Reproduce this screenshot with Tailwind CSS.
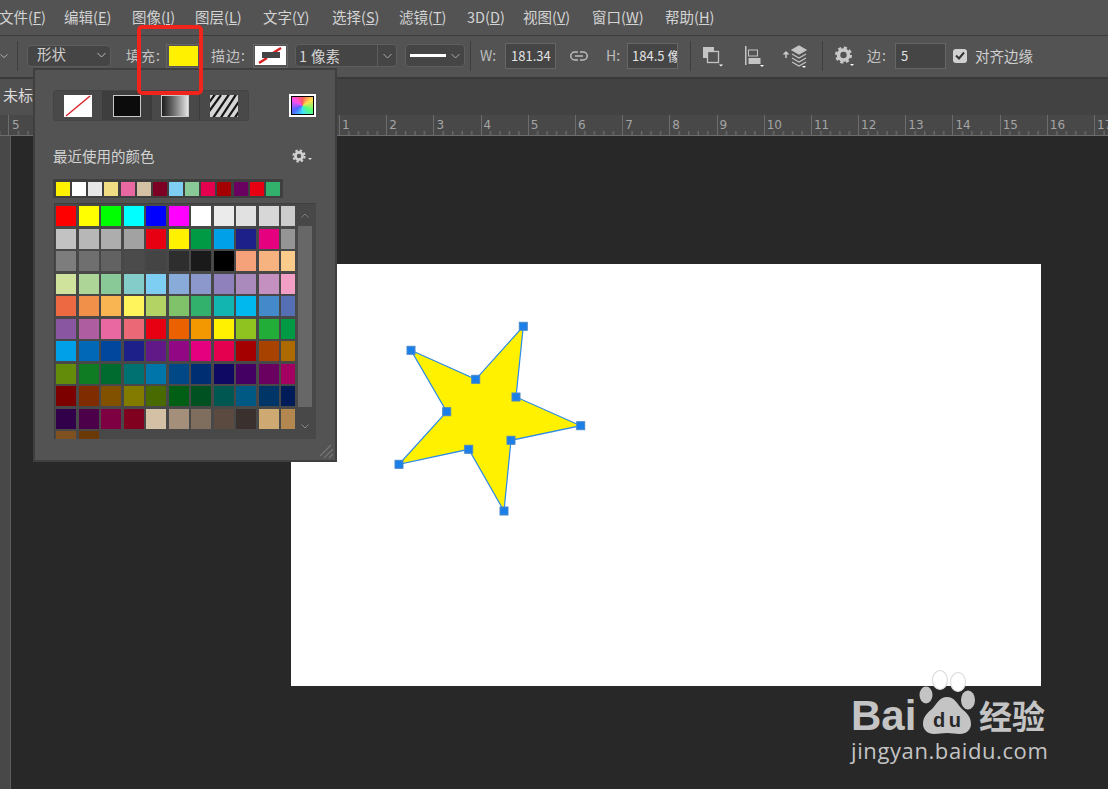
<!DOCTYPE html>
<html lang="zh">
<head>
<meta charset="utf-8">
<script src="https://cdn.jsdelivr.net/npm/@tailwindcss/browser@4"></script>
<title>Photoshop</title>
</head>
<body class="bg-[#282828]">
<div class="relative w-[1108px] h-[789px] overflow-hidden flex flex-col bg-[#282828] text-[#d4d4d4] text-[14px] font-['Noto_Sans_CJK_SC','Noto_Sans',sans-serif]">

  <!-- menu bar -->
  <nav class="flex items-center shrink-0 h-[36px] pb-[2px] bg-[#535353] border-b border-[#3c3c3c] whitespace-nowrap text-[14.5px]">
    <span class="w-[64px] -ml-[1px]">文件(<u>F</u>)</span>
    <span class="w-[68px] ml-[1px]">编辑(<u>E</u>)</span>
    <span class="w-[63px]">图像(<u>I</u>)</span>
    <span class="w-[68px]">图层(<u>L</u>)</span>
    <span class="w-[69px]">文字(<u>Y</u>)</span>
    <span class="w-[67px]">选择(<u>S</u>)</span>
    <span class="w-[68px]">滤镜(<u>T</u>)</span>
    <span class="w-[56px]">3D(<u>D</u>)</span>
    <span class="w-[69px]">视图(<u>V</u>)</span>
    <span class="w-[73px]">窗口(<u>W</u>)</span>
    <span>帮助(<u>H</u>)</span>
  </nav>

  <!-- options bar -->
  <div class="flex items-center shrink-0 h-[43px] pb-[2px] bg-[#535353] border-b-2 border-[#3a3a3a] whitespace-nowrap text-[14px] text-[#c4c4c4]">
    <svg class="w-[8px] h-[6px]" viewBox="0 0 8 6"><path d="M0.5 1.5L4 4.5L7.5 1.5" fill="none" stroke="#aaa"/></svg>
    <div class="ml-[9px] w-px h-[30px] bg-[#3e3e3e]"></div>
    <div class="ml-[9px] w-[84px] h-[22px] flex items-center justify-between pl-[9px] pr-[4px] pb-[1px] rounded-[4px] bg-[#454545] border border-[#5e5e5e] text-[14.5px] text-[#d0d0d0]">
      <span class="-mt-[2px]">形状</span>
      <svg class="w-[9px] h-[6px]" viewBox="0 0 9 6"><path d="M0.5 1L4.5 5L8.5 1" fill="none" stroke="#bbb"/></svg>
    </div>
    <span class="ml-[15px] w-[36px] tracking-[1px] -mt-[1px]">填充:</span>
    <div class="ml-[4px] w-[35px] h-[24px] flex items-center justify-center border border-[#656565]"><div class="w-[29px] h-[20px] bg-[#fff100]"></div></div>
    <span class="ml-[10px] w-[36px] tracking-[1px] -mt-[1px]">描边:</span>
    <div class="ml-[6px] w-[35px] h-[24px] flex items-center justify-center border border-[#656565]">
      <svg class="w-[31px] h-[19px]" viewBox="0 0 31 19"><rect width="31" height="19" fill="#fff"/><path d="M4 17L12 12M18 7L26 2" stroke="#d8211f" stroke-width="2.5"/><rect x="7" y="6" width="18" height="6" fill="#444"/></svg>
    </div>
    <div class="ml-[7px] w-[102px] h-[23px] flex items-center rounded-[4px] bg-[#454545] border border-[#5e5e5e] text-[14.5px] text-[#d6d6d6]">
      <span class="flex-1 pl-[3px] flex gap-[4px]"><span>1</span><span>像素</span></span>
      <span class="w-[19px] h-full flex items-center justify-center border-l border-[#5e5e5e]"><svg class="w-[9px] h-[6px]" viewBox="0 0 9 6"><path d="M0.5 1L4.5 5L8.5 1" fill="none" stroke="#aaa"/></svg></span>
    </div>
    <div class="ml-[8px] w-[60px] h-[23px] flex items-center justify-between pl-[4px] pr-[4px] rounded-[4px] bg-[#454545] border border-[#5e5e5e]">
      <div class="w-[36px] h-[3px] bg-white"></div>
      <svg class="w-[9px] h-[6px]" viewBox="0 0 9 6"><path d="M0.5 1L4.5 5L8.5 1" fill="none" stroke="#aaa"/></svg>
    </div>
    <div class="ml-[5px] w-px h-[30px] bg-[#3e3e3e]"></div>
    <span class="ml-[9px] w-[17px] text-[14px] text-[#bdbdbd]">W:</span>
    <div class="ml-[8px] w-[51px] h-[26px] flex items-center pl-[5px] bg-[#454545] border border-[#666] text-[13px] text-[#e2e2e2]">181.34</div>
    <svg class="ml-[14px] w-[18px] h-[10px]" viewBox="0 0 18 10"><path d="M8 1H4.8a4 4 0 0 0 0 8H8M10 1H13.2a4 4 0 0 1 0 8H10M5 5H13" fill="none" stroke="#bdbdbd" stroke-width="1.5"/></svg>
    <span class="ml-[18px] w-[14px] text-[14px] text-[#bdbdbd]">H:</span>
    <div class="ml-[7px] w-[51px] h-[26px] flex items-center pl-[4px] overflow-hidden bg-[#454545] border border-[#666] text-[13px] text-[#e2e2e2]">184.5 像</div>
    <div class="ml-[12px] w-px h-[30px] bg-[#3e3e3e]"></div>
    <svg class="ml-[11px] w-[22px] h-[22px]" viewBox="0 0 22 22"><rect x="1" y="2" width="11" height="11" fill="#c4c4c4"/><rect x="5.5" y="6.5" width="11" height="11" fill="#535353" stroke="#c4c4c4" stroke-width="1.3"/><path d="M17 19.5H21L19 21.5Z" fill="#fff"/></svg>
    <svg class="ml-[21px] w-[20px] h-[22px]" viewBox="0 0 20 22"><rect x="0" y="1" width="1.5" height="19" fill="#c4c4c4"/><rect x="3.5" y="5" width="9" height="6" fill="#535353" stroke="#c4c4c4"/><rect x="3.5" y="13" width="12" height="6" fill="#c4c4c4"/><path d="M15 20H19L17 22Z" fill="#fff"/></svg>
    <svg class="ml-[18px] w-[25px] h-[24px]" viewBox="0 0 25 24"><path d="M3 14V9M0.5 10.5L3 8L5.5 10.5" fill="none" stroke="#ccc" stroke-width="1.5"/><path d="M16 2L23 6L16 10L9 6Z" fill="#c4c4c4" stroke="#c4c4c4" stroke-width="1.2"/><path d="M9 10L16 14L23 10M9 14L16 18L23 14M9 18L16 22L23 18" fill="none" stroke="#c4c4c4" stroke-width="1.2"/><path d="M19 22H23L21 24Z" fill="#fff"/></svg>
    <div class="ml-[14px] w-px h-[30px] bg-[#3e3e3e]"></div>
    <svg class="ml-[12px] w-[20px] h-[22px]" viewBox="0 0 20 22"><circle cx="8.5" cy="10" r="5" fill="none" stroke="#c8c8c8" stroke-width="3.6"/><circle cx="8.5" cy="10" r="7.3" fill="none" stroke="#c8c8c8" stroke-width="2.4" stroke-dasharray="3.2 2.54"/><path d="M15 19H19L17 21Z" fill="#fff"/></svg>
    <span class="ml-[12px] w-[22px] tracking-[1px] -mt-[1px]">边:</span>
    <div class="ml-[6px] w-[51px] h-[26px] flex items-center pl-[5px] bg-[#454545] border border-[#666] text-[13px] text-[#e2e2e2]">5</div>
    <div class="ml-[7px] w-[14px] h-[14px] flex items-center justify-center rounded-[3px] bg-[#d0d0d0]">
      <svg class="w-[10px] h-[9px]" viewBox="0 0 10 9"><path d="M1 4.5L4 7.5L9 1.5" fill="none" stroke="#333" stroke-width="2"/></svg>
    </div>
    <span class="ml-[8px] text-[14.5px] text-[#d0d0d0]">对齐边缘</span>
  </div>

  <!-- tab row -->
  <div class="flex shrink-0 h-[36px] bg-[#424242]">
    <div class="w-[60px] h-full flex items-center pl-[3px] pb-[3px] bg-[#505050] text-[15px] text-[#dcdcdc]">未标</div>
  </div>

  <!-- horizontal ruler -->
  <div class="relative flex shrink-0 h-[21px] pl-[8px] bg-[#484848] border-b border-[#6c6c6c] text-[12px] leading-[20px] text-[#a4a4a4] font-['DejaVu_Sans',sans-serif] overflow-hidden">
    <svg class="absolute inset-0 w-[1108px] h-[20px]" viewBox="0 0 1108 20"><defs><pattern id="t" x="339" y="0" width="47.2" height="20" patternUnits="userSpaceOnUse"><path d="M9.9 16V20M19.4 16V20M28.8 16V20M38.3 16V20" stroke="#777" stroke-width="1"/></pattern></defs><rect width="1108" height="20" fill="url(#t)"/></svg>
    <span class="shrink-0 w-[331px] pl-[3px] border-l border-[#6c6c6c]">5</span>
    <span class="shrink-0 w-[47.2px] pl-[2px] border-l border-[#6c6c6c]">1</span>
    <span class="shrink-0 w-[47.2px] pl-[2px] border-l border-[#6c6c6c]">2</span>
    <span class="shrink-0 w-[47.2px] pl-[2px] border-l border-[#6c6c6c]">3</span>
    <span class="shrink-0 w-[47.2px] pl-[2px] border-l border-[#6c6c6c]">4</span>
    <span class="shrink-0 w-[47.2px] pl-[2px] border-l border-[#6c6c6c]">5</span>
    <span class="shrink-0 w-[47.2px] pl-[2px] border-l border-[#6c6c6c]">6</span>
    <span class="shrink-0 w-[47.2px] pl-[2px] border-l border-[#6c6c6c]">7</span>
    <span class="shrink-0 w-[47.2px] pl-[2px] border-l border-[#6c6c6c]">8</span>
    <span class="shrink-0 w-[47.2px] pl-[2px] border-l border-[#6c6c6c]">9</span>
    <span class="shrink-0 w-[47.2px] pl-[2px] border-l border-[#6c6c6c]">10</span>
    <span class="shrink-0 w-[47.2px] pl-[2px] border-l border-[#6c6c6c]">11</span>
    <span class="shrink-0 w-[47.2px] pl-[2px] border-l border-[#6c6c6c]">12</span>
    <span class="shrink-0 w-[47.2px] pl-[2px] border-l border-[#6c6c6c]">13</span>
    <span class="shrink-0 w-[47.2px] pl-[2px] border-l border-[#6c6c6c]">14</span>
    <span class="shrink-0 w-[47.2px] pl-[2px] border-l border-[#6c6c6c]">15</span>
    <span class="shrink-0 w-[47.2px] pl-[2px] border-l border-[#6c6c6c]">16</span>
    <span class="shrink-0 w-[47.2px] pl-[2px] border-l border-[#6c6c6c]">17</span>
  </div>

  <!-- workspace -->
  <div class="flex flex-1 min-h-0">
    <div class="shrink-0 w-[11px] bg-[#484848] border-r border-[#5c5c5c]"></div>
    <div class="flex-1 pl-[280px] pt-[128px]">
      <div class="relative w-[750px] h-[422px] bg-white">
        <svg class="absolute inset-0 w-[750px] h-[422px]" viewBox="291 264 750 422">
          <path d="M523.3 326.3L516 397L580.7 425.7L511 440.3L504 511L468.7 449.3L399 464.3L446.7 411.7L411 350.3L475.7 379.3Z" fill="#fff100" stroke="#2d8ae6" stroke-width="1.2"/>
          <g fill="#1a7fe8" stroke="#4a88c8" stroke-width="1">
            <rect x="519.3" y="322.3" width="8" height="8"/>
            <rect x="512" y="393" width="8" height="8"/>
            <rect x="576.7" y="421.7" width="8" height="8"/>
            <rect x="507" y="436.3" width="8" height="8"/>
            <rect x="500" y="507" width="8" height="8"/>
            <rect x="464.7" y="445.3" width="8" height="8"/>
            <rect x="395" y="460.3" width="8" height="8"/>
            <rect x="442.7" y="407.7" width="8" height="8"/>
            <rect x="407" y="346.3" width="8" height="8"/>
            <rect x="471.7" y="375.3" width="8" height="8"/>
          </g>
        </svg>
      </div>
    </div>
  </div>

  <!-- swatches panel -->
  <div class="absolute left-[33px] top-[68px] w-[304px] h-[394px] flex flex-col pl-[18px] bg-[#535353] border-2 border-[#3f3f3f]">
    <div class="flex items-center justify-between mt-[20px] pr-[19px]">
      <div class="flex h-[31px] w-[196px] rounded-[3px] border border-[#444] bg-[#494949]">
        <div class="flex-1 flex items-center justify-center border-r border-[#3c3c3c]">
          <svg class="w-[28px] h-[22px]" viewBox="0 0 28 22"><rect width="28" height="22" fill="#fff"/><path d="M2 21L26 1" stroke="#d8262c" stroke-width="1.5"/></svg>
        </div>
        <div class="flex-1 flex items-center justify-center border-r border-[#3c3c3c] bg-[#3e3e3e]">
          <div class="w-[28px] h-[22px] bg-[#0c0c0c] border border-[#c8c8c8]"></div>
        </div>
        <div class="flex-1 flex items-center justify-center border-r border-[#3c3c3c]">
          <div class="w-[28px] h-[22px] bg-gradient-to-r from-[#1e1e1e] to-[#e6e6e6] border border-[#c8c8c8]"></div>
        </div>
        <div class="flex-1 flex items-center justify-center">
          <svg class="w-[28px] h-[22px]" viewBox="0 0 28 22"><rect width="28" height="22" fill="#d6d6d6"/><path d="M-2 9L6 -2M-2 18L11 0M3 23L20 -2M10 24L27 -2M17 24L32 2M24 24L32 12" stroke="#161616" stroke-width="2.2"/></svg>
        </div>
      </div>
      <div class="w-[27px] h-[23px] bg-white p-[2px]">
        <div class="w-full h-full border border-black bg-[conic-gradient(#ff5a5a,#ffe14d,#55ff7a,#3fe0ff,#4d63ff,#ff4df0,#ff5a5a)]"></div>
      </div>
    </div>
    <div class="flex items-center justify-between mt-[24px] pr-[22px] h-[22px] text-[14.5px] text-[#d2d2d2]">
      <span>最近使用的颜色</span>
      <svg class="w-[21px] h-[14px]" viewBox="0 0 21 14"><circle cx="7" cy="7" r="3.6" fill="none" stroke="#d0d0d0" stroke-width="2.8"/><circle cx="7" cy="7" r="5.6" fill="none" stroke="#d0d0d0" stroke-width="2" stroke-dasharray="2.4 2"/><path d="M16 9H20L18 11Z" fill="#ddd"/></svg>
    </div>
    <div class="flex gap-[2.15px] mt-[12px] w-[230px] h-[19px] pl-[3px] pt-[3px] bg-[#3f3f3f]">
      <i class="w-[14px] h-[14px] bg-[#fff100]"></i><i class="w-[14px] h-[14px] bg-white"></i><i class="w-[14px] h-[14px] bg-[#e8e8e8]"></i><i class="w-[14px] h-[14px] bg-[#f0dc82]"></i><i class="w-[14px] h-[14px] bg-[#ea68a2]"></i><i class="w-[14px] h-[14px] bg-[#d3c0a5]"></i><i class="w-[14px] h-[14px] bg-[#7b0024]"></i><i class="w-[14px] h-[14px] bg-[#7ecef4]"></i><i class="w-[14px] h-[14px] bg-[#89c997]"></i><i class="w-[14px] h-[14px] bg-[#e5004f]"></i><i class="w-[14px] h-[14px] bg-[#a40000]"></i><i class="w-[14px] h-[14px] bg-[#6a005f]"></i><i class="w-[14px] h-[14px] bg-[#e60012]"></i><i class="w-[14px] h-[14px] bg-[#32b16c]"></i>
    </div>
    <div class="flex mt-[5px] w-[262px] h-[236px] ml-[1px] bg-[#484848] border-t border-l border-[#3f3f3f]">
      <div class="w-[240px] h-full overflow-hidden pl-[1px] pt-[2px]">
        <div class="grid grid-cols-[repeat(11,20px)] auto-rows-[20px] gap-[2.5px] w-max">
          <i class="bg-[#ff0000]"></i><i class="bg-[#ffff00]"></i><i class="bg-[#00ff00]"></i><i class="bg-[#00ffff]"></i><i class="bg-[#0000ff]"></i><i class="bg-[#ff00ff]"></i><i class="bg-[#ffffff]"></i><i class="bg-[#ebebeb]"></i><i class="bg-[#e1e1e1]"></i><i class="bg-[#d7d7d7]"></i><i class="bg-[#cccccc]"></i>
          <i class="bg-[#c2c2c2]"></i><i class="bg-[#b7b7b7]"></i><i class="bg-[#adadad]"></i><i class="bg-[#a2a2a2]"></i><i class="bg-[#e60012]"></i><i class="bg-[#fff100]"></i><i class="bg-[#009944]"></i><i class="bg-[#00a0e9]"></i><i class="bg-[#1d2088]"></i><i class="bg-[#e4007f]"></i><i class="bg-[#959595]"></i>
          <i class="bg-[#7d7d7d]"></i><i class="bg-[#6f6f6f]"></i><i class="bg-[#626262]"></i><i class="bg-[#4b4b4b]"></i><i class="bg-[#444444]"></i><i class="bg-[#2e2e2e]"></i><i class="bg-[#1a1a1a]"></i><i class="bg-[#000000]"></i><i class="bg-[#f5a17a]"></i><i class="bg-[#f7b37f]"></i><i class="bg-[#fbcb8b]"></i>
          <i class="bg-[#cfe39c]"></i><i class="bg-[#add598]"></i><i class="bg-[#89c997]"></i><i class="bg-[#84ccc9]"></i><i class="bg-[#7ecef4]"></i><i class="bg-[#88abda]"></i><i class="bg-[#8c97cb]"></i><i class="bg-[#8f82bc]"></i><i class="bg-[#aa89bd]"></i><i class="bg-[#c490bf]"></i><i class="bg-[#f29fc5]"></i>
          <i class="bg-[#ec6941]"></i><i class="bg-[#f19149]"></i><i class="bg-[#f8b551]"></i><i class="bg-[#fff45c]"></i><i class="bg-[#b3d465]"></i><i class="bg-[#80c269]"></i><i class="bg-[#32b16c]"></i><i class="bg-[#13b5b1]"></i><i class="bg-[#00b7ee]"></i><i class="bg-[#448aca]"></i><i class="bg-[#556fb5]"></i>
          <i class="bg-[#8957a1]"></i><i class="bg-[#ae5da1]"></i><i class="bg-[#ea68a2]"></i><i class="bg-[#eb6877]"></i><i class="bg-[#e60012]"></i><i class="bg-[#eb6100]"></i><i class="bg-[#f39800]"></i><i class="bg-[#fff100]"></i><i class="bg-[#8fc31f]"></i><i class="bg-[#22ac38]"></i><i class="bg-[#009944]"></i>
          <i class="bg-[#00a0e9]"></i><i class="bg-[#0068b7]"></i><i class="bg-[#00479d]"></i><i class="bg-[#1d2088]"></i><i class="bg-[#601986]"></i><i class="bg-[#920783]"></i><i class="bg-[#e4007f]"></i><i class="bg-[#e5004f]"></i><i class="bg-[#a40000]"></i><i class="bg-[#a84200]"></i><i class="bg-[#ac6a00]"></i>
          <i class="bg-[#638c0b]"></i><i class="bg-[#0f7c24]"></i><i class="bg-[#006b2f]"></i><i class="bg-[#007171]"></i><i class="bg-[#0075a9]"></i><i class="bg-[#004986]"></i><i class="bg-[#002e73]"></i><i class="bg-[#100964]"></i><i class="bg-[#440062]"></i><i class="bg-[#6a005f]"></i><i class="bg-[#a40062]"></i>
          <i class="bg-[#7d0000]"></i><i class="bg-[#7f2d00]"></i><i class="bg-[#815100]"></i><i class="bg-[#837b00]"></i><i class="bg-[#486a00]"></i><i class="bg-[#005e15]"></i><i class="bg-[#005121]"></i><i class="bg-[#005650]"></i><i class="bg-[#005982]"></i><i class="bg-[#003567]"></i><i class="bg-[#001c58]"></i>
          <i class="bg-[#32004b]"></i><i class="bg-[#4b0049]"></i><i class="bg-[#7e0043]"></i><i class="bg-[#7f001f]"></i><i class="bg-[#d3c0a5]"></i><i class="bg-[#a48f7a]"></i><i class="bg-[#7f6e5e]"></i><i class="bg-[#5b4a40]"></i><i class="bg-[#3a302d]"></i><i class="bg-[#cfa972]"></i><i class="bg-[#b28850]"></i>
          <i class="bg-[#7f5020]"></i><i class="bg-[#6a3906]"></i>
        </div>
      </div>
      <div class="flex w-[21px] h-full">
        <div class="w-[3px] h-full"></div>
        <div class="w-[18px] h-full flex flex-col">
          <div class="h-[22px] flex items-center justify-center pr-[4px]"><svg class="w-[8px] h-[5px]" viewBox="0 0 8 5"><path d="M0.5 4.5L4 1L7.5 4.5" fill="none" stroke="#7c7c7c"/></svg></div>
          <div class="flex-1 flex"><div class="w-[14px] bg-[#676767]"></div></div>
          <div class="h-[32px] flex items-end justify-center pb-[10px] pr-[4px]"><svg class="w-[8px] h-[5px]" viewBox="0 0 8 5"><path d="M0.5 0.5L4 4L7.5 0.5" fill="none" stroke="#8a8a8a"/></svg></div>
        </div>
      </div>
    </div>
    <svg class="absolute right-[1px] bottom-[1px] w-[15px] h-[15px]" viewBox="0 0 15 15"><path d="M1 12L12 1M5 14L14 5M10 14L14 10" stroke="#757575" stroke-width="1.2"/></svg>
  </div>

  <!-- red annotation -->
  <div class="absolute left-[137px] top-[25px] w-[66px] h-[70px] rounded-[5px] border-[4px] border-[#f0241b]"></div>

  <!-- watermark -->
  <svg class="absolute left-[915px] top-[668px] w-[65px] h-[70px]" viewBox="915 668 65 70">
    <ellipse cx="940" cy="680" rx="7.5" ry="9.5" fill="#ffffff" stroke="#dcdcdc" stroke-width="1.2"/>
    <ellipse cx="958" cy="682" rx="7.5" ry="9.5" fill="#ffffff" stroke="#dcdcdc" stroke-width="1.2"/>
    <ellipse cx="926" cy="695" rx="6.5" ry="8.5" fill="#c4c4c4"/>
    <ellipse cx="968" cy="700" rx="7" ry="9.5" fill="#c4c4c4"/>
    <path d="M947 697c-8 0-10 7-15 12-5 4-9 8-9 15 0 6 5 10 11 10 5 0 8-1 13-1s8 1 13 1c6 0 11-4 11-10 0-7-4-11-9-15-5-5-7-12-15-12z" fill="#c4c4c4"/>
    <text x="933" y="727" class="font-['Liberation_Sans'] font-bold text-[20px]" fill="#282828" textLength="28">du</text>
  </svg>
  <div class="absolute left-[851px] top-[696px] flex items-center h-[40px] text-[#c4c4c4]">
    <span class="w-[128px] font-['Liberation_Sans'] font-bold text-[42px] leading-[40px]">Bai</span>
    <span class="font-['Noto_Sans_CJK_SC'] font-bold text-[33px] leading-[40px] -mt-[2px]">经验</span>
  </div>
  <div class="absolute left-[851px] top-[736px] text-[#c4c4c4] text-[22px] leading-[28px] tracking-[0.6px] font-['Open_Sans',sans-serif]">jingyan.baidu.com</div>
</div>
</body>
</html>
